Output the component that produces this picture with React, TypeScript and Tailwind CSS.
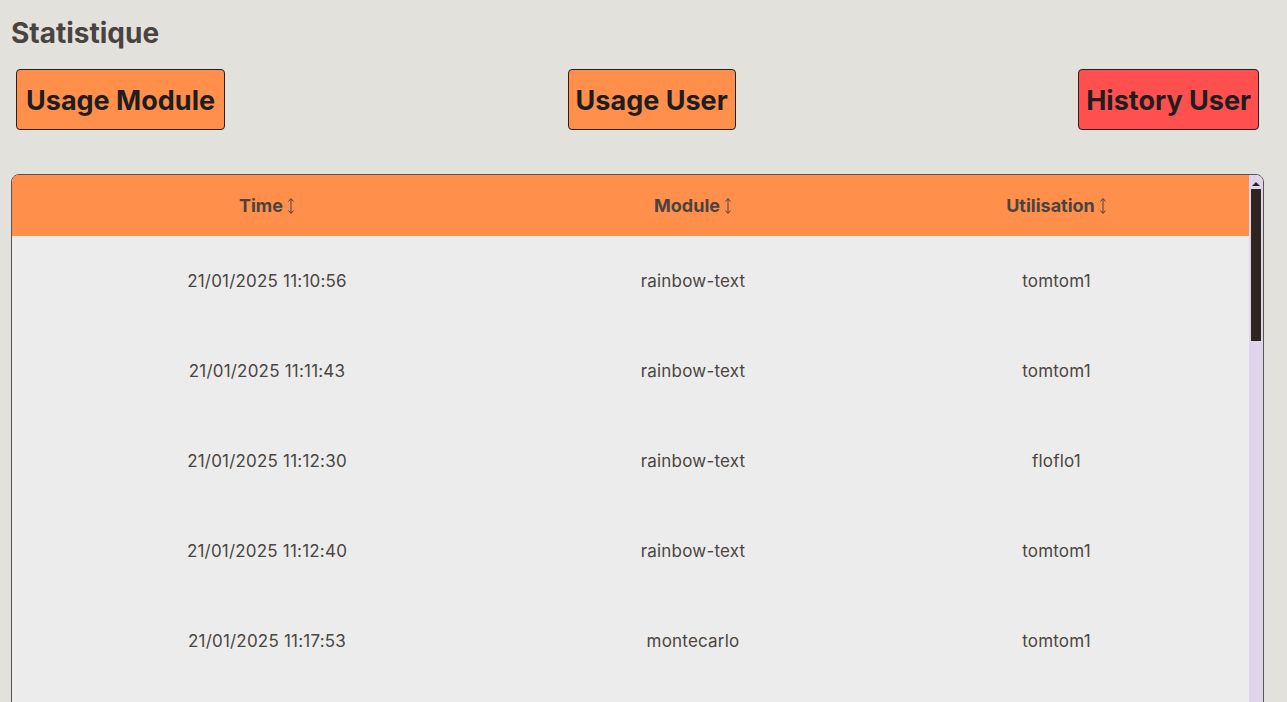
import React from "react";

const rows = [
  ["21/01/2025 11:10:56", "rainbow-text", "tomtom1"],
  ["21/01/2025 11:11:43", "rainbow-text", "tomtom1"],
  ["21/01/2025 11:12:30", "rainbow-text", "floflo1"],
  ["21/01/2025 11:12:40", "rainbow-text", "tomtom1"],
  ["21/01/2025 11:17:53", "montecarlo", "tomtom1"],
];

function SortIcon() {
  return (
    <svg width="8" height="18" viewBox="0 0 8 18" className="inline-block ml-[4px] align-[-3px]">
      <path d="M4 2 V16" stroke="#4a4440" strokeWidth="1" fill="none" />
      <path d="M1.5 4.5 L4 1.5 L6.5 4.5" stroke="#4a4440" strokeWidth="1" fill="none" />
      <path d="M1.5 13.5 L4 16.5 L6.5 13.5" stroke="#4a4440" strokeWidth="1" fill="none" />
    </svg>
  );
}

export default function App() {
  const font = { fontFamily: "Inter, 'Open Sans', sans-serif" };
  return (
    <div className="h-[702px] overflow-hidden bg-[#e3e1dc] pl-[11px] pt-[14px]" style={font}>
      <div className="w-[1253px]">
        <h1 className="text-[28px] leading-[38px] font-bold text-[#4a4440]">Statistique</h1>
        <div className="flex justify-between px-[5px] mt-[17px]">
          <button className="h-[61px] px-[9px] pt-[3px] rounded-[4px] border border-[#222] bg-[#ff8f4b] text-[27px] font-bold text-[#1e1e1e]">
            Usage Module
          </button>
          <button className="h-[61px] px-[7px] pt-[3px] rounded-[4px] border border-[#222] bg-[#ff8f4b] text-[27px] font-bold text-[#1e1e1e]">
            Usage User
          </button>
          <button className="h-[61px] px-[7px] pt-[3px] rounded-[4px] border border-[#222] bg-[#ff4f4f] text-[27px] font-bold text-[#1e1e1e]">
            History User
          </button>
        </div>
        <div className="mt-[44px] flex h-[700px] rounded-[8px] border border-[#555] overflow-hidden bg-[#ececec]">
          <div className="w-[1237px]">
            <div className="grid grid-cols-[510px_342px_385px] h-[61px] bg-[#ff8f4b] items-center text-[18px] font-bold text-[#4a4440]">
              <div className="text-center">Time<SortIcon /></div>
              <div className="text-center">Module<SortIcon /></div>
              <div className="text-center">Utilisation<SortIcon /></div>
            </div>
            {rows.map((r, i) => (
              <div key={i} className="grid grid-cols-[510px_342px_385px] h-[90px] pt-[2px] items-center text-[17px] tracking-[0.2px] text-[#4b4542]">
                <div className="text-center">{r[0]}</div>
                <div className="text-center">{r[1]}</div>
                <div className="text-center">{r[2]}</div>
              </div>
            ))}
          </div>
          <div className="w-[14px] bg-[#e0d4ed] flex flex-col items-center pt-[6px]">
            <svg width="8" height="5" viewBox="0 0 8 5">
              <path d="M0 5 L4 1 L8 5 Z" fill="#2e2420" />
            </svg>
            <div className="mt-[3px] w-[10px] h-[152px] bg-[#2e2420]" />
          </div>
        </div>
      </div>
    </div>
  );
}
